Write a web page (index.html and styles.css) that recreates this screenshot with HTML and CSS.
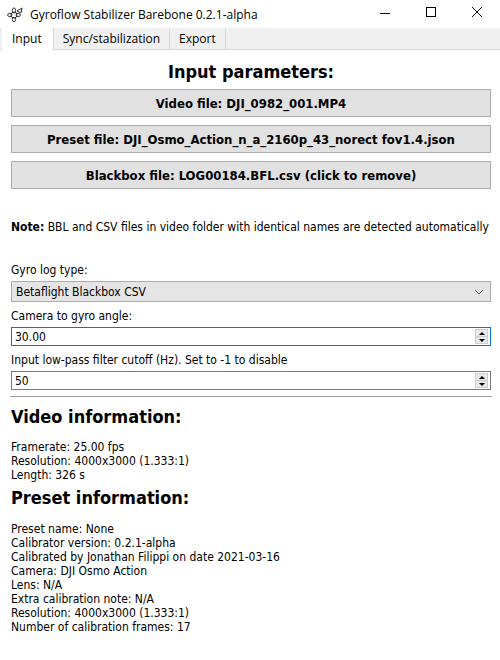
FILE: index.html
```html
<!DOCTYPE html>
<html lang="en">
  <head>
    <meta charset="UTF-8" />
    <title>Gyroflow Stabilizer Barebone 0.2.1-alpha</title>
    <link rel="stylesheet" href="styles.css">
  </head>
  <body>
    <div class="titlebar">
      <svg class="app-icon" width="16" height="16" viewBox="0 0 16 16">
        <g fill="none" stroke="#333" stroke-width="1">
          <circle cx="7" cy="9" r="3" />
          <ellipse cx="7" cy="4.5" rx="1.6" ry="2.6" />
          <ellipse cx="7" cy="13.5" rx="1.6" ry="2.2" />
          <ellipse cx="2.8" cy="9" rx="2.2" ry="1.6" />
          <ellipse cx="11.2" cy="9" rx="2.2" ry="1.6" />
          <path d="M10 5 L15 2 L14 7 Z" />
        </g>
      </svg>
      <span class="title">Gyroflow Stabilizer Barebone 0.2.1-alpha</span>
      <div class="window-controls">
        <svg width="46" height="28" viewBox="0 0 46 28"><path d="M18 13.5 H28" stroke="#000" stroke-width="1" /></svg>
        <svg width="46" height="28" viewBox="0 0 46 28"><rect x="18.5" y="7.5" width="9" height="9" fill="none" stroke="#000" stroke-width="1" /></svg>
        <svg width="46" height="28" viewBox="0 0 46 28"><path d="M18 7 L28 17 M28 7 L18 17" stroke="#000" stroke-width="1" /></svg>
      </div>
    </div>

    <div class="tabs">
      <div class="tab active">Input</div>
      <div class="tab">Sync/stabilization</div>
      <div class="tab">Export</div>
    </div>

    <div class="panel">
      <h2 class="params-title">Input parameters:</h2>
      <div class="file-buttons">
        <button class="file-button">Video file: DJI_0982_001.MP4</button>
        <button class="file-button">Preset file: DJI_Osmo_Action_n_a_2160p_43_norect fov1.4.json</button>
        <button class="file-button">Blackbox file: LOG00184.BFL.csv (click to remove)</button>
      </div>

      <p class="note"><b>Note:</b> BBL and CSV files in video folder with identical names are detected automatically</p>

      <div class="field first-field">
        <label>Gyro log type:</label>
        <div class="combo">
          <span>Betaflight Blackbox CSV</span>
          <svg width="10" height="6" viewBox="0 0 10 6"><path d="M1 1 L5 5 L9 1" fill="none" stroke="#555" stroke-width="1" /></svg>
        </div>
      </div>
      <div class="field">
        <label>Camera to gyro angle:</label>
        <div class="spin focused">
          <span>30.00</span>
          <div class="spin-buttons">
            <div class="spin-up"></div>
            <div class="spin-down"></div>
          </div>
        </div>
      </div>
      <div class="field">
        <label>Input low-pass filter cutoff (Hz). Set to -1 to disable</label>
        <div class="spin">
          <span>50</span>
          <div class="spin-buttons">
            <div class="spin-up"></div>
            <div class="spin-down"></div>
          </div>
        </div>
      </div>

      <hr class="divider">

      <h2 class="info-title video-title">Video information:</h2>
      <div class="info video-info">
        <div>Framerate: 25.00 fps</div>
        <div>Resolution: 4000x3000 (1.333:1)</div>
        <div>Length: 326 s</div>
      </div>

      <h2 class="info-title preset-title">Preset information:</h2>
      <div class="info preset-info">
        <div>Preset name: None</div>
        <div>Calibrator version: 0.2.1-alpha</div>
        <div>Calibrated by Jonathan Filippi on date 2021-03-16</div>
        <div>Camera: DJI Osmo Action</div>
        <div>Lens: N/A</div>
        <div>Extra calibration note: N/A</div>
        <div>Resolution: 4000x3000 (1.333:1)</div>
        <div>Number of calibration frames: 17</div>
      </div>
    </div>
  </body>
</html>
```

FILE: styles.css
```css
body {
  margin: 0;
  background-color: white;
  font-family: "DejaVu Sans Condensed", "DejaVu Sans", sans-serif;
  font-size: 12px;
  color: #000;
  overflow: hidden;
}
.titlebar {
  height: 28px;
  display: flex;
  align-items: center;
  background-color: white;
}
.app-icon {
  margin-left: 7px;
  margin-right: 7px;
}
.title {
  font-family: "Open Sans", "Noto Sans", sans-serif;
  font-size: 12px;
  color: #000;
}
.window-controls {
  margin-left: auto;
  display: flex;
}
.window-controls svg {
  display: block;
}
.tabs {
  height: 21px;
  display: flex;
  background-color: #f0f0f0;
  border-bottom: 1px solid #d9d9d9;
  padding-left: 2px;
  font-family: "Open Sans", "Noto Sans", sans-serif;
  font-size: 12px;
}
.tab {
  padding: 0 9px;
  line-height: 21px;
  border-right: 1px solid #d9d9d9;
}
.tab.active {
  background-color: white;
  padding: 0 11px 0 10px;
  height: 22px;
}
.panel {
  padding: 0 9px 0 11px;
}
.params-title {
  margin: 11px 0 6px;
  text-align: center;
  font-size: 18px;
  line-height: 22px;
  font-weight: bold;
}
.file-buttons {
  display: flex;
  flex-direction: column;
  gap: 8px;
}
.file-button {
  height: 28px;
  background-color: #e1e1e1;
  border: 1px solid #adadad;
  font-family: "DejaVu Sans Condensed", "DejaVu Sans", sans-serif;
  font-size: 13px;
  font-weight: bold;
  color: #000;
  padding: 0;
}
.note {
  margin: 31px 0 0;
  line-height: 14px;
  white-space: nowrap;
}
.field {
  margin-top: 7px;
}
.first-field {
  margin-top: 29px;
}
.field label {
  display: block;
  line-height: 14px;
  margin-bottom: 4px;
}
.combo {
  height: 19px;
  display: flex;
  align-items: center;
  justify-content: space-between;
  background-color: #e5e5e5;
  border: 1px solid #acacac;
  padding: 0 6px 0 4px;
}
.spin {
  height: 17px;
  display: flex;
  align-items: center;
  justify-content: space-between;
  border: 1px solid #7a7a7a;
  padding: 0 2px 0 3px;
}
.spin.focused {
  border-color: #0078d7;
}
.spin-buttons {
  width: 13px;
  height: 15px;
  display: flex;
  flex-direction: column;
  background-color: #e8e8e8;
  border: 1px solid #cfcfcf;
  box-sizing: border-box;
}
.spin-up,
.spin-down {
  flex: 1;
  display: flex;
  align-items: center;
  justify-content: center;
}
.spin-up {
  border-bottom: 1px solid #cfcfcf;
}
.spin-up::after {
  content: "";
  border-left: 3px solid transparent;
  border-right: 3px solid transparent;
  border-bottom: 3px solid #000;
}
.spin-down::after {
  content: "";
  border-left: 3px solid transparent;
  border-right: 3px solid transparent;
  border-top: 3px solid #000;
}
.divider {
  margin: 6px -1px 0;
  border: none;
  border-top: 1px solid #a0a0a0;
}
.info-title {
  font-size: 18px;
  line-height: 22px;
  font-weight: bold;
}
.video-title {
  margin: 9px 0 0;
}
.preset-title {
  margin: 5px 0 0;
}
.info {
  line-height: 14px;
}
.video-info {
  margin-top: 12px;
}
.preset-info {
  margin-top: 13px;
}
```
